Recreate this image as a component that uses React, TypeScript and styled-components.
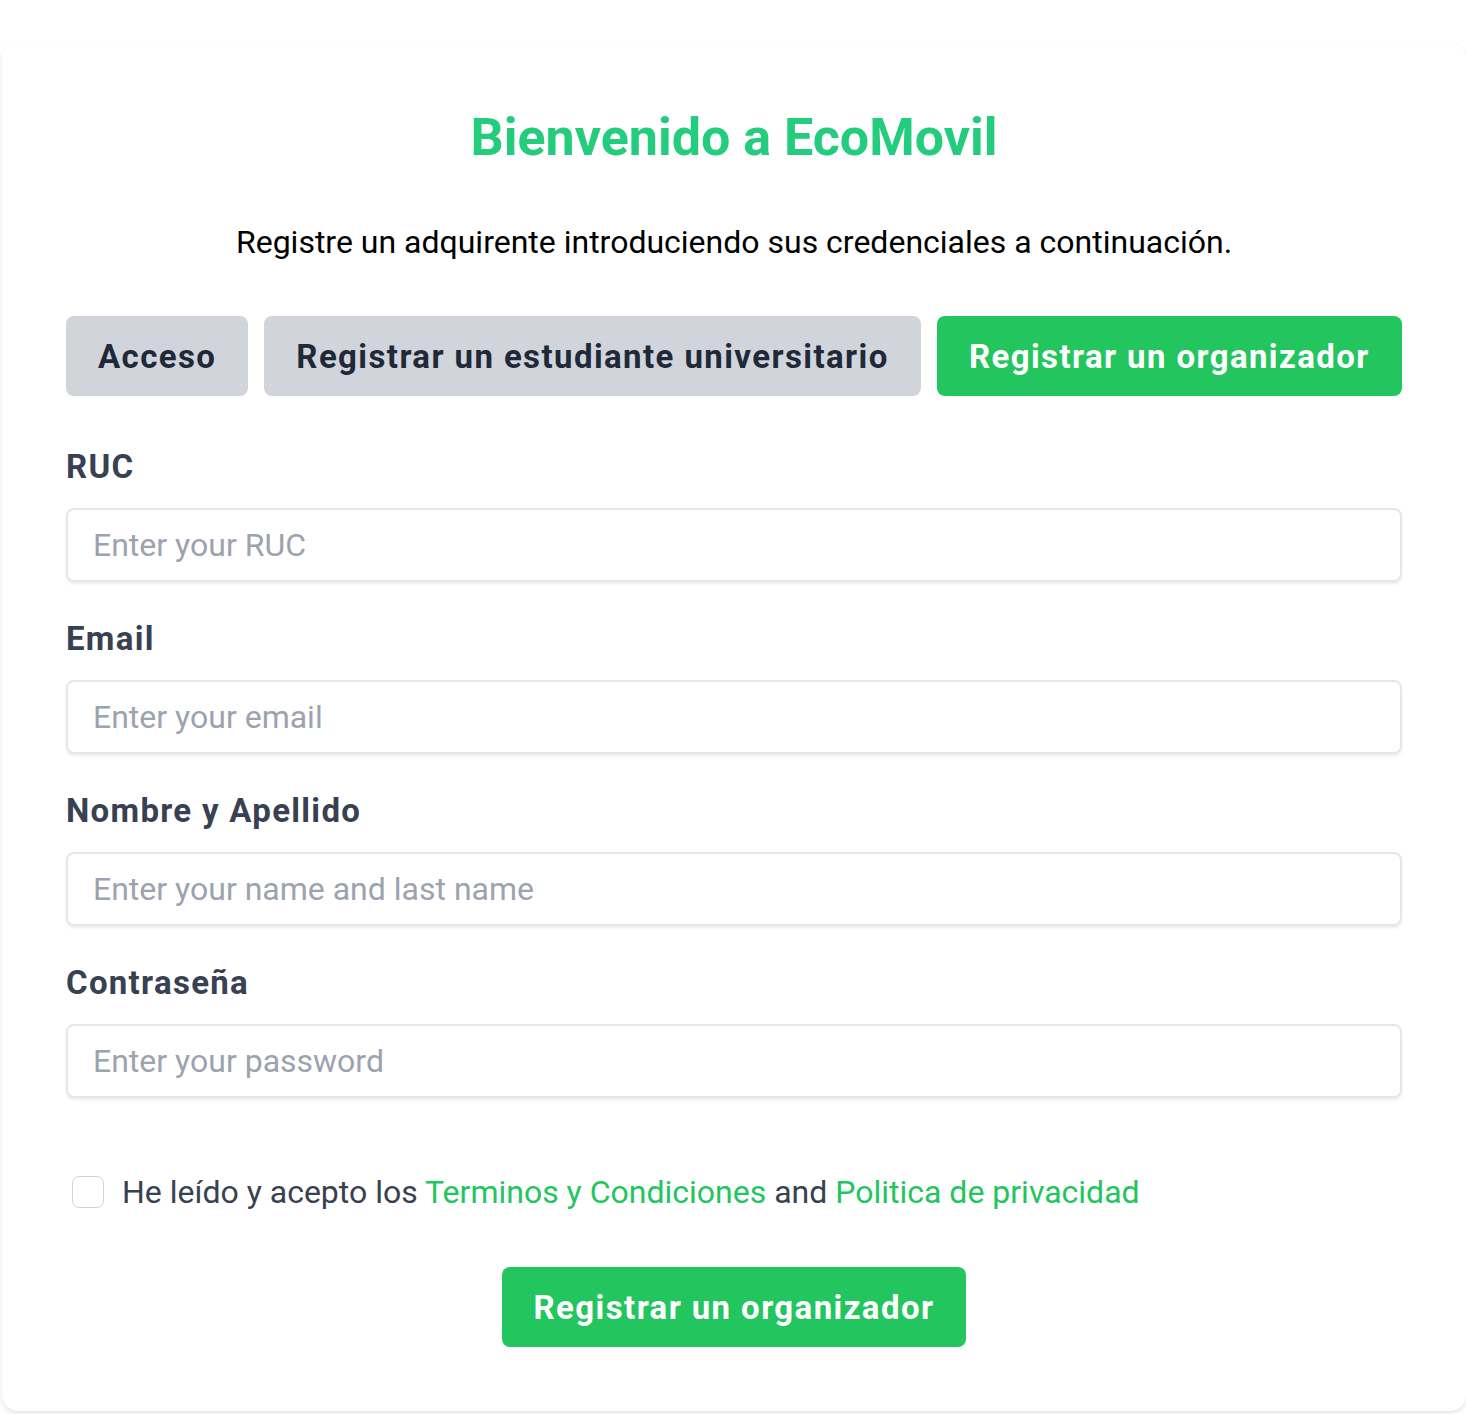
import React from 'react'
import styled, { createGlobalStyle } from 'styled-components'

const GlobalStyle = createGlobalStyle`
  html, body {
    margin: 0;
    padding: 0;
    background: #ffffff;
    font-family: Roboto, 'Liberation Sans', sans-serif;
  }
  * {
    box-sizing: border-box;
  }
`

const green = '#22c55e'

const Page = styled.div`
  padding: 42px 0 3px 2px;
`

const Card = styled.div`
  background: #fff;
  border-radius: 16px;
  box-shadow: 0 3px 5px rgba(0, 0, 0, 0.09), 0 0 2px rgba(0, 0, 0, 0.04);
  padding: 63px 64px 64px;
  display: flex;
  flex-direction: column;
`

const Title = styled.h1`
  margin: 0;
  text-align: center;
  font-size: 52px;
  line-height: 66px;
  font-weight: 700;
  color: #24cc7d;
`

const Subtitle = styled.p`
  margin: 51px 0 0;
  text-align: center;
  font-size: 32px;
  line-height: 40px;
  color: #000;
`

const Tabs = styled.div`
  display: flex;
  gap: 16px;
  margin-top: 54px;
`

const Tab = styled.button<{ $active?: boolean }>`
  height: 80px;
  padding: 0 32px;
  border: none;
  border-radius: 8px;
  font-family: inherit;
  font-size: 33px;
  font-weight: 700;
  letter-spacing: 1.4px;
  white-space: nowrap;
  color: ${(p) => (p.$active ? '#fff' : '#1f2937')};
  background: ${(p) => (p.$active ? green : '#d1d5db')};
  flex: ${(p) => (p.$active ? 1 : 'none')};
  cursor: pointer;
`

const Fields = styled.div`
  display: flex;
  flex-direction: column;
  gap: 37px;
  margin-top: 51px;
`

const Field = styled.div`
  display: flex;
  flex-direction: column;
`

const Label = styled.label`
  font-size: 33px;
  line-height: 40px;
  font-weight: 700;
  letter-spacing: 1.3px;
  color: #374151;
  margin-bottom: 21px;
`

const Input = styled.input`
  height: 74px;
  width: 100%;
  padding: 0 25px;
  border: 2px solid #e5e7eb;
  border-radius: 8px;
  box-shadow: 0 2px 3px rgba(0, 0, 0, 0.08);
  font-family: inherit;
  font-size: 32px;
  color: #374151;
  outline: none;
  &::placeholder {
    color: #9ca3af;
  }
`

const Agree = styled.label`
  display: flex;
  align-items: center;
  gap: 18px;
  margin-top: 74px;
  padding-left: 6px;
  font-size: 32px;
  line-height: 40px;
  color: #374151;
`

const Box = styled.span`
  width: 32px;
  height: 32px;
  border: 1.5px solid #d1d5db;
  border-radius: 7px;
  background: #fff;
  flex: none;
`

const Link = styled.a`
  color: ${green};
  text-decoration: none;
`

const Submit = styled.button`
  align-self: center;
  margin-top: 55px;
  height: 80px;
  padding: 0 32px;
  border: none;
  border-radius: 8px;
  background: ${green};
  color: #fff;
  font-family: inherit;
  font-size: 33px;
  font-weight: 700;
  letter-spacing: 1.4px;
  white-space: nowrap;
  cursor: pointer;
`

const fields = [
  { label: 'RUC', placeholder: 'Enter your RUC', type: 'text' },
  { label: 'Email', placeholder: 'Enter your email', type: 'email' },
  { label: 'Nombre y Apellido', placeholder: 'Enter your name and last name', type: 'text' },
  { label: 'Contraseña', placeholder: 'Enter your password', type: 'password' },
]

export default function App() {
  return (
    <Page>
      <GlobalStyle />
      <Card>
        <Title>Bienvenido a EcoMovil</Title>
        <Subtitle>Registre un adquirente introduciendo sus credenciales a continuación.</Subtitle>
        <Tabs>
          <Tab>Acceso</Tab>
          <Tab>Registrar un estudiante universitario</Tab>
          <Tab $active>Registrar un organizador</Tab>
        </Tabs>
        <Fields>
          {fields.map((f) => (
            <Field key={f.label}>
              <Label>{f.label}</Label>
              <Input type={f.type} placeholder={f.placeholder} />
            </Field>
          ))}
        </Fields>
        <Agree>
          <Box />
          <span>
            He leído y acepto los <Link href="#">Terminos y Condiciones</Link> and{' '}
            <Link href="#">Politica de privacidad</Link>
          </span>
        </Agree>
        <Submit>Registrar un organizador</Submit>
      </Card>
    </Page>
  )
}
